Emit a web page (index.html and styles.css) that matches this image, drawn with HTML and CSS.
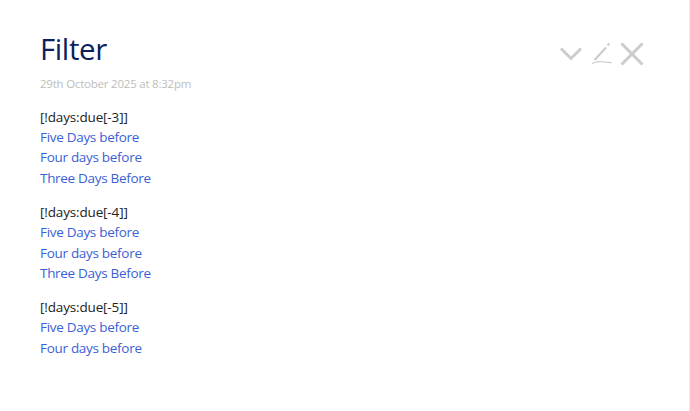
FILE: index.html
```html
<!DOCTYPE html>
<html lang="en">
<head>
<meta charset="utf-8">
<title>Filter</title>
<link rel="stylesheet" href="styles.css">
</head>
<body>
<main class="tiddler">
  <header class="title-row">
    <h1 class="title">Filter</h1>
    <div class="controls">
      <svg class="icon" width="24" height="24" viewBox="0 0 24 24"><path d="M2 6.500 L12 16.500 L22 6.500" class="stroke"/></svg>
      <svg class="icon" width="23" height="24" viewBox="0 0 23 24"><path d="M4.500 18 L16 5.500" class="stroke thin"/><path d="M17.500 3.500 L19.500 1.500" class="stroke thin"/><path d="M2 21.500 C6 19.500 10 19.500 13 20 C16 20.500 18 19.500 21.500 21" class="stroke hair"/></svg>
      <svg class="icon" width="24" height="24" viewBox="0 0 24 24"><path d="M1.500 1.500 L22.500 22.500 M22.500 1.500 L1.500 22.500" class="stroke"/></svg>
    </div>
  </header>
  <div class="subtitle">29th October 2025 at 8:32pm</div>
  <section class="group">
    <div class="head">[!days:due[-3]]</div>
    <a class="link">Five Days before</a>
    <a class="link">Four days before</a>
    <a class="link">Three Days Before</a>
  </section>
  <section class="group">
    <div class="head">[!days:due[-4]]</div>
    <a class="link">Five Days before</a>
    <a class="link">Four days before</a>
    <a class="link">Three Days Before</a>
  </section>
  <section class="group">
    <div class="head">[!days:due[-5]]</div>
    <a class="link">Five Days before</a>
    <a class="link">Four days before</a>
  </section>
</main>
</body>
</html>
```
FILE: styles.css
```css
html, body { margin: 0; height: 100%; background: #fff; }
body { font-family: "Open Sans", "Noto Sans", sans-serif; overflow: hidden; }
.tiddler { box-sizing: border-box; height: 411px; padding: 28px 45px 0 40px; border-right: 1px solid #ececec; }
.title-row { display: flex; justify-content: space-between; align-items: center; height: 41px; }
.title { margin: 0; font-size: 29.500px; font-weight: 400; line-height: 41px; letter-spacing: -0.400px; color: #0b1f5c; }
.controls { display: flex; gap: 7px; align-items: center; margin-top: 11px; }
.icon { display: block; }
.stroke { fill: none; stroke: #cccccc; stroke-width: 3; }
.thin { stroke-width: 2.200; }
.hair { stroke-width: 1.200; }
.subtitle { margin: 6px 0 0.350px; font-size: 11.500px; line-height: 18px; letter-spacing: -0.220px; color: #bdbdbd; }
.group { margin-top: 13.600px; font-size: 13.500px; line-height: 20.400px; letter-spacing: -0.300px; }
.head { color: #222; letter-spacing: -0.150px; }
.link { display: block; color: #3a5fd6; }
```
